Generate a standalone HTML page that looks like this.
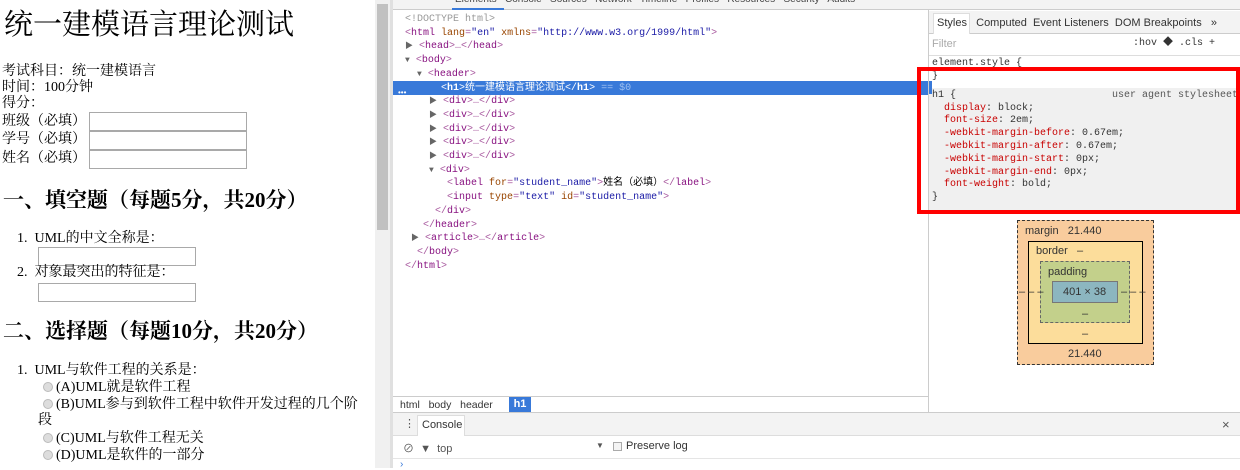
<!DOCTYPE html>
<html><head><meta charset="utf-8"><style>
*{margin:0;padding:0;box-sizing:border-box}
body{width:1240px;height:468px;overflow:hidden;background:#fff;position:relative;font-family:"Liberation Serif","Noto Serif CJK SC",serif;color:#000}
.a{position:absolute;white-space:nowrap}
.p{font-size:14px;line-height:16px}
.in{position:absolute;border:1px solid #a9a9a9;background:#fff}
.m{font-family:"Liberation Mono","Noto Sans CJK SC",monospace;font-size:10px;line-height:13.7px;color:#a8599f}
.t{color:#881280}.an{color:#994500}.av{color:#1a1aa6}.g{color:#999}
.s{font-family:"Liberation Sans","Noto Sans CJK SC",sans-serif;font-size:11px;color:#333}
.tri{font-size:8px;color:#666}
.rad{display:inline-block;width:10px;height:10px;border-radius:50%;background:#ddd;border:1px solid #bbb;vertical-align:-1px;margin-right:3px}
.pr{color:#c80000}
</style></head><body>
<!-- page -->
<div class="a" style="left:4px;top:7px;font-size:29px;line-height:36px;">统一建模语言理论测试</div>
<div class="a p" style="left:2px;top:64px">考试科目：统一建模语言</div>
<div class="a p" style="left:2px;top:80px">时间：100分钟</div>
<div class="a p" style="left:2px;top:96px">得分：</div>
<div class="a p" style="left:2px;top:114px">班级（必填）</div>
<div class="in" style="left:89px;top:112px;width:158px;height:19px"></div>
<div class="a p" style="left:2px;top:132px">学号（必填）</div>
<div class="in" style="left:89px;top:131px;width:158px;height:19px"></div>
<div class="a p" style="left:2px;top:151px">姓名（必填）</div>
<div class="in" style="left:89px;top:150px;width:158px;height:19px"></div>
<div class="a" style="left:3px;top:187px;font-size:21px;line-height:26px;font-weight:bold">一、填空题（每题5分，共20分）</div>
<div class="a p" style="left:17px;top:231px">1.&nbsp; UML的中文全称是：</div>
<div class="in" style="left:38px;top:247px;width:158px;height:19px"></div>
<div class="a p" style="left:17px;top:265px">2.&nbsp; 对象最突出的特征是：</div>
<div class="in" style="left:38px;top:283px;width:158px;height:19px"></div>
<div class="a" style="left:3px;top:318px;font-size:21px;line-height:26px;font-weight:bold">二、选择题（每题10分，共20分）</div>
<div class="a p" style="left:17px;top:363px">1.&nbsp; UML与软件工程的关系是：</div>
<div class="a p" style="left:43px;top:380px"><span class="rad"></span>(A)UML就是软件工程</div>
<div class="a p" style="left:43px;top:397px"><span class="rad"></span>(B)UML参与到软件工程中软件开发过程的几个阶</div>
<div class="a p" style="left:38px;top:413px">段</div>
<div class="a p" style="left:43px;top:431px"><span class="rad"></span>(C)UML与软件工程无关</div>
<div class="a p" style="left:43px;top:448px"><span class="rad"></span>(D)UML是软件的一部分</div>
<!-- scrollbar -->
<div class="a" style="left:375px;top:0;width:15px;height:468px;background:#f0f0f0"></div>
<div class="a" style="left:377px;top:4px;width:11px;height:226px;background:#c1c1c1"></div>
<div class="a" style="left:390px;top:0;width:3px;height:468px;background:#e0e0e0"></div>
<!-- devtools top bar -->
<div class="a" style="left:393px;top:0;width:847px;height:10px;background:#f3f3f3;border-bottom:1px solid #ccc"></div>
<div class="a s" style="left:455px;top:-6px;font-size:10px;color:#444">Elements &nbsp; Console &nbsp; Sources &nbsp; Network &nbsp; Timeline &nbsp; Profiles &nbsp; Resources &nbsp; Security &nbsp; Audits</div>
<div class="a" style="left:452px;top:8px;width:52px;height:2px;background:#3879d9"></div>
<!-- elements tree -->
<div class="a" style="left:393px;top:81px;width:535px;height:14px;background:#3879d9"></div>
<div class="a m" style="left:405px;top:13px">
<div class="g">&lt;!DOCTYPE html&gt;</div>
<div>&lt;<span class="t">html</span> <span class="an">lang</span>=<span class="av">"en"</span> <span class="an">xmlns</span>=<span class="av">"http://www.w3.org/1999/html"</span>&gt;</div>
<div><span class="tri">▶</span> &lt;<span class="t">head</span>&gt;…&lt;/<span class="t">head</span>&gt;</div>
<div><span class="tri">▼</span> &lt;<span class="t">body</span>&gt;</div>
<div>&nbsp; <span class="tri">▼</span> &lt;<span class="t">header</span>&gt;</div>
<div style="color:#fff">&nbsp;&nbsp;&nbsp;&nbsp;&nbsp; &lt;<b>h1</b>&gt;统一建模语言理论测试&lt;/<b>h1</b>&gt; <span style="color:#9ec0f0">== $0</span></div>
<div>&nbsp;&nbsp;&nbsp; <span class="tri">▶</span> &lt;<span class="t">div</span>&gt;…&lt;/<span class="t">div</span>&gt;</div>
<div>&nbsp;&nbsp;&nbsp; <span class="tri">▶</span> &lt;<span class="t">div</span>&gt;…&lt;/<span class="t">div</span>&gt;</div>
<div>&nbsp;&nbsp;&nbsp; <span class="tri">▶</span> &lt;<span class="t">div</span>&gt;…&lt;/<span class="t">div</span>&gt;</div>
<div>&nbsp;&nbsp;&nbsp; <span class="tri">▶</span> &lt;<span class="t">div</span>&gt;…&lt;/<span class="t">div</span>&gt;</div>
<div>&nbsp;&nbsp;&nbsp; <span class="tri">▶</span> &lt;<span class="t">div</span>&gt;…&lt;/<span class="t">div</span>&gt;</div>
<div>&nbsp;&nbsp;&nbsp; <span class="tri">▼</span> &lt;<span class="t">div</span>&gt;</div>
<div>&nbsp;&nbsp;&nbsp;&nbsp;&nbsp;&nbsp; &lt;<span class="t">label</span> <span class="an">for</span>=<span class="av">"student_name"</span>&gt;<span style="color:#000">姓名（必填）</span>&lt;/<span class="t">label</span>&gt;</div>
<div>&nbsp;&nbsp;&nbsp;&nbsp;&nbsp;&nbsp; &lt;<span class="t">input</span> <span class="an">type</span>=<span class="av">"text"</span> <span class="an">id</span>=<span class="av">"student_name"</span>&gt;</div>
<div>&nbsp;&nbsp;&nbsp;&nbsp; &lt;/<span class="t">div</span>&gt;</div>
<div>&nbsp;&nbsp; &lt;/<span class="t">header</span>&gt;</div>
<div>&nbsp;<span class="tri">▶</span> &lt;<span class="t">article</span>&gt;…&lt;/<span class="t">article</span>&gt;</div>
<div>&nbsp; &lt;/<span class="t">body</span>&gt;</div>
<div>&lt;/<span class="t">html</span>&gt;</div>
</div>
<div class="a" style="left:398px;top:88px;font-size:8px;color:#fff;font-family:'Liberation Sans'">•••</div>
<!-- styles panel -->
<div class="a" style="left:928px;top:10px;width:1px;height:403px;background:#ccc"></div>
<div class="a" style="left:929px;top:11px;width:311px;height:23px;background:#f3f3f3;border-bottom:1px solid #ccc"></div>
<div class="a" style="left:933px;top:13px;width:37px;height:21px;background:#fff;border:1px solid #ddd;border-bottom:none"></div>
<div class="a s" style="left:937px;top:17px;font-size:11px">Styles &nbsp;&nbsp;Computed &nbsp;Event Listeners &nbsp;DOM Breakpoints &nbsp;&nbsp;»</div>
<div class="a s" style="left:932px;top:38px;color:#aaa">Filter</div>
<div class="a m" style="left:1133px;top:37px;color:#333;font-size:10px">:hov ◆ .cls +</div>
<div class="a" style="left:929px;top:55px;width:311px;height:1px;background:#ddd"></div>
<div class="a m" style="left:932px;top:57px;color:#333">element.style {</div>
<div class="a" style="left:929px;top:88px;width:311px;height:122px;background:#f0f0f0"></div>
<div class="a" style="left:929px;top:81px;width:3px;height:13px;background:#3879d9"></div>
<div class="a m" style="left:932px;top:71px;color:#333;line-height:12.8px">
<div>}</div>
<div style="margin-top:6px">h1 { <span style="margin-left:150px;color:#555">user agent stylesheet</span></div>
<div>&nbsp;&nbsp;<span class="pr">display</span>: block;</div>
<div>&nbsp;&nbsp;<span class="pr">font-size</span>: 2em;</div>
<div>&nbsp;&nbsp;<span class="pr">-webkit-margin-before</span>: 0.67em;</div>
<div>&nbsp;&nbsp;<span class="pr">-webkit-margin-after</span>: 0.67em;</div>
<div>&nbsp;&nbsp;<span class="pr">-webkit-margin-start</span>: 0px;</div>
<div>&nbsp;&nbsp;<span class="pr">-webkit-margin-end</span>: 0px;</div>
<div>&nbsp;&nbsp;<span class="pr">font-weight</span>: bold;</div>
<div>}</div>
</div>
<div class="a" style="left:917px;top:67px;width:323px;height:147px;border:4px solid #f00"></div>
<!-- box model -->
<div class="a" style="left:1017px;top:220px;width:137px;height:145px;background:#f9cc9d;border:1px dashed #333"></div>
<div class="a" style="left:1028px;top:241px;width:115px;height:103px;background:#fcdd9b;border:1px solid #000"></div>
<div class="a" style="left:1040px;top:261px;width:90px;height:62px;background:#c3d08b;border:1px dashed #666"></div>
<div class="a" style="left:1052px;top:281px;width:66px;height:22px;background:#8cb6c0;border:1px solid #777"></div>
<div class="a s" style="left:1025px;top:225px">margin &nbsp; 21.440</div>
<div class="a s" style="left:1036px;top:245px">border &nbsp; –</div>
<div class="a s" style="left:1048px;top:266px">padding</div>
<div class="a s" style="left:1063px;top:286px">401 × 38</div>
<div class="a s" style="left:1082px;top:308px">–</div>
<div class="a s" style="left:1082px;top:328px">–</div>
<div class="a s" style="left:1068px;top:348px">21.440</div>
<div class="a s" style="left:1019px;top:286px">–&nbsp;–&nbsp;–</div>
<div class="a s" style="left:1121px;top:286px">–&nbsp;–&nbsp;–</div>
<!-- breadcrumb -->
<div class="a" style="left:393px;top:396px;width:535px;height:1px;background:#ccc"></div>
<div class="a s" style="left:400px;top:399px;font-size:10.5px">html &nbsp; body &nbsp; header</div>
<div class="a s" style="left:509px;top:397px;width:22px;height:15px;background:#3879d9;color:#fff;font-weight:bold;text-align:center;line-height:15px">h1</div>
<!-- console drawer -->
<div class="a" style="left:393px;top:412px;width:847px;height:24px;background:#f3f3f3;border-top:1px solid #ccc;border-bottom:1px solid #ddd"></div>
<div class="a s" style="left:404px;top:417px;color:#555">⋮</div>
<div class="a" style="left:417px;top:415px;width:48px;height:21px;background:#fff;border:1px solid #ddd;border-bottom:none"></div>
<div class="a s" style="left:422px;top:419px">Console</div>
<div class="a s" style="left:1222px;top:417px;font-size:13px;color:#555">×</div>
<div class="a s" style="left:403px;top:440px;font-size:11px;color:#555">⊘ &nbsp;▼ &nbsp;top</div>
<div class="a s" style="left:596px;top:441px;font-size:8px;color:#555">▼</div>
<div class="a" style="left:613px;top:442px;width:9px;height:9px;border:1px solid #aaa;background:#f4f4f4"></div>
<div class="a s" style="left:626px;top:440px">Preserve log</div>
<div class="a" style="left:393px;top:458px;width:847px;height:1px;background:#e5e5e5"></div>
<div class="a s" style="left:400px;top:459px;color:#3879d9;font-size:10px">›</div>
</body></html>
